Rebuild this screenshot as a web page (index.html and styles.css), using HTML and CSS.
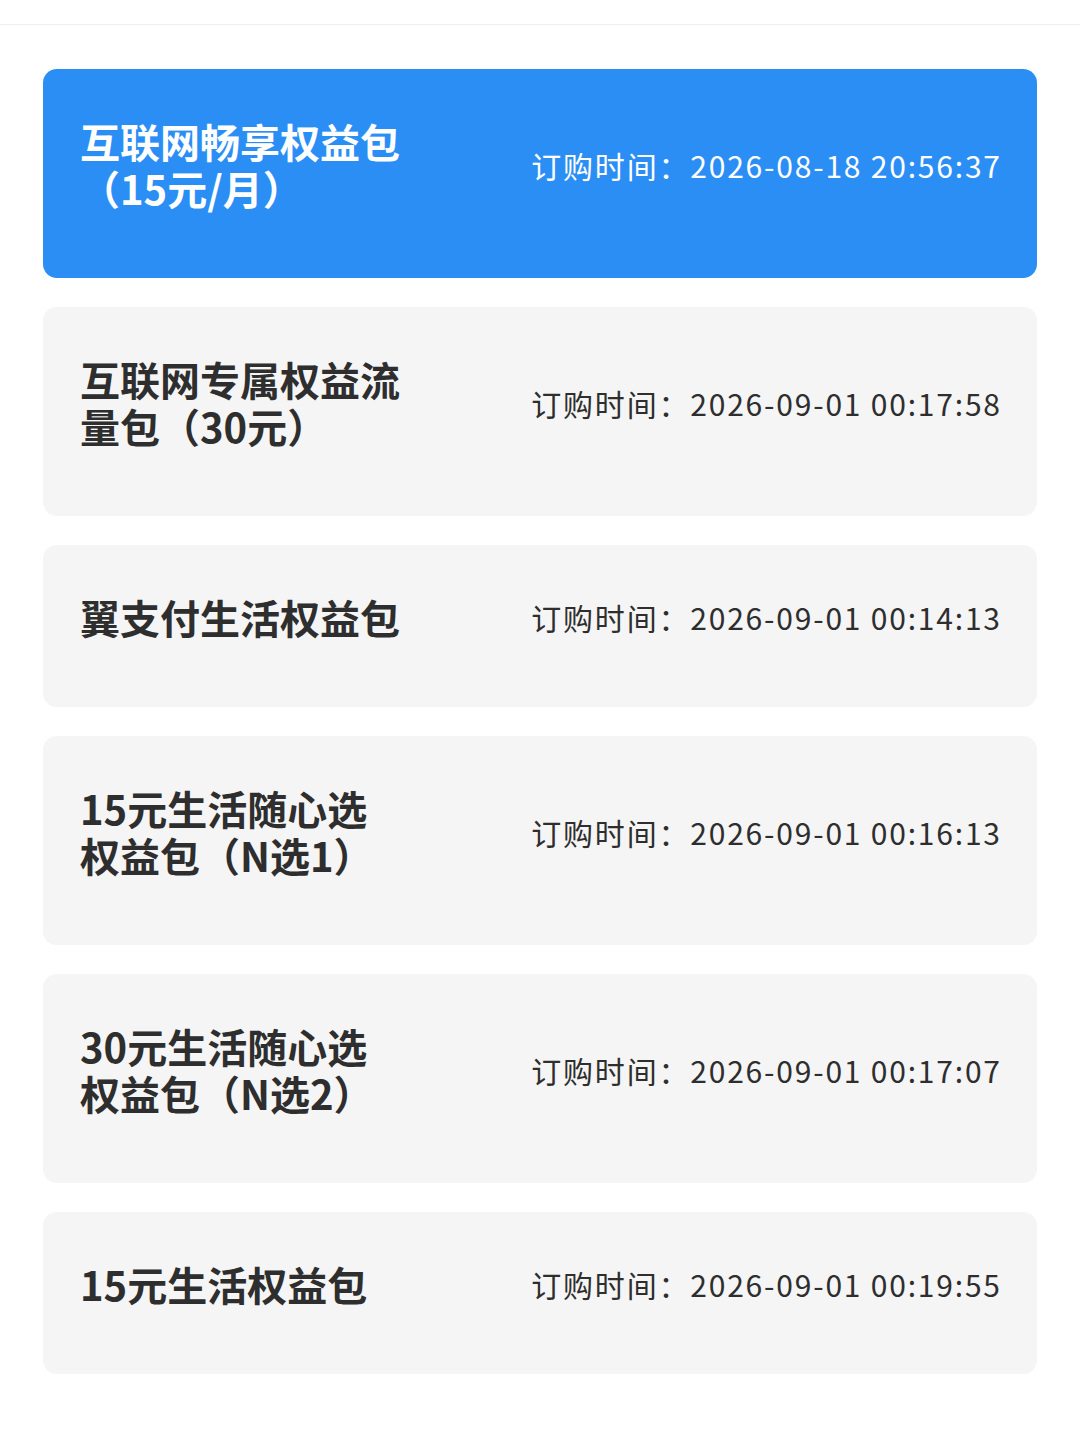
FILE: index.html
```html
<!DOCTYPE html>
<html lang="zh">
<head>
<meta charset="utf-8">
<link rel="stylesheet" href="styles.css">
</head>
<body>
<div class="topbar"></div>
<div class="list">
  <div class="card active">
    <div class="title">互联网畅享权益包（15元/月）</div>
    <div class="time">订购时间：2026-08-18 20:56:37</div>
  </div>
  <div class="card">
    <div class="title">互联网专属权益流量包（30元）</div>
    <div class="time">订购时间：2026-09-01 00:17:58</div>
  </div>
  <div class="card">
    <div class="title">翼支付生活权益包</div>
    <div class="time">订购时间：2026-09-01 00:14:13</div>
  </div>
  <div class="card">
    <div class="title">15元生活随心选权益包（N选1）</div>
    <div class="time">订购时间：2026-09-01 00:16:13</div>
  </div>
  <div class="card">
    <div class="title">30元生活随心选权益包（N选2）</div>
    <div class="time">订购时间：2026-09-01 00:17:07</div>
  </div>
  <div class="card">
    <div class="title">15元生活权益包</div>
    <div class="time">订购时间：2026-09-01 00:19:55</div>
  </div>
</div>
</body>
</html>
```

FILE: styles.css
```css
html, body {
  margin: 0;
  padding: 0;
  background: #ffffff;
  font-family: "Noto Sans CJK SC", "Noto Sans", sans-serif;
}
.topbar {
  height: 24px;
  border-bottom: 1px solid #efefef;
}
.list {
  display: flex;
  flex-direction: column;
  gap: 29px;
  padding: 44px 43px 0;
}
.card {
  display: flex;
  align-items: center;
  justify-content: space-between;
  background: #f5f5f5;
  border-radius: 14px;
  padding: 49px 37px 66px;
  color: #2e2e2e;
}
.card.active {
  background: #2b8ef5;
  color: #ffffff;
}
.title {
  width: 321px;
  font-size: 40px;
  font-weight: 700;
  line-height: 47px;
}
.time {
  font-size: 30px;
  line-height: 47px;
  letter-spacing: 1.8px;
  margin-right: -1.8px;
  white-space: nowrap;
}
```
